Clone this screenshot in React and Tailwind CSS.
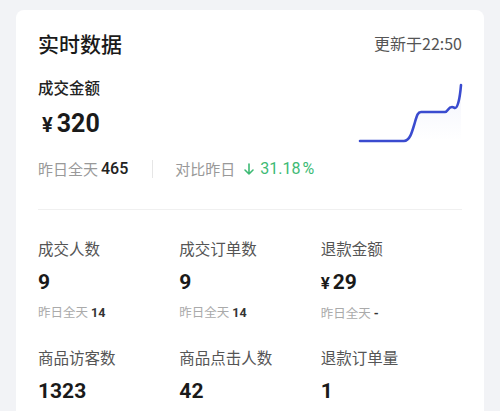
import React from "react";

const font = { fontFamily: '"Noto Sans CJK SC", "Noto Sans", sans-serif' };
const num = { fontFamily: 'Roboto, "Noto Sans CJK SC", sans-serif' };

function Stat({ label, value, prefix, yday }) {
  return (
    <div className="flex flex-col">
      <div className="text-[15.5px] leading-[22px] text-[#555]">{label}</div>
      <div className="mt-[10px] flex items-baseline text-[21px] leading-[26px] font-bold text-[#1a1a1a]" style={num}>
        {prefix && <span className="mr-[3px] text-[17px] font-bold">¥</span>}
        {value}
      </div>
      {yday !== undefined && (
        <div className="mt-[8px] flex items-baseline text-[12.5px] leading-[18px] text-[#aaa]">
          <span>昨日全天</span>
          <span className="ml-[3px] font-bold text-[#333]" style={num}>{yday}</span>
        </div>
      )}
    </div>
  );
}

export default function App() {
  return (
    <div className="h-[411px] w-[500px] overflow-hidden bg-[#f2f3f6] pl-[16px] pr-[16px] pt-[10px]" style={font}>
      <div className="h-[420px] rounded-[8px] bg-white px-[22px] pt-[18px]">
        <div className="flex items-center justify-between">
          <div className="text-[21px] leading-[30px] font-medium text-[#1a1a1a]">实时数据</div>
          <div className="text-[16px] leading-[22px] text-[#555]">更新于22:50</div>
        </div>
        <div className="mt-[18px] flex justify-between">
          <div className="flex flex-col">
            <div className="text-[15.5px] leading-[22px] font-medium text-[#222]">成交金额</div>
            <div className="mt-[10px] ml-[4px] flex items-baseline text-[25px] leading-[32px] font-bold text-[#1a1a1a]" style={num}>
              <span className="mr-[4px] text-[20px]">¥</span>320
            </div>
            <div className="mt-[17px] flex items-center text-[15px] leading-[22px]">
              <span className="text-[#999]">昨日全天</span>
              <span className="ml-[3px] text-[16px] font-medium text-[#222]" style={num}>465</span>
              <span className="ml-[24px] mr-[22px] h-[18px] w-px bg-[#e6e6e6]"></span>
              <span className="text-[#999]">对比昨日</span>
              <span className="ml-[8px] flex items-center text-[16px] text-[#3dba74]" style={num}>
                <svg width="12" height="14" viewBox="0 0 12 14" fill="none" stroke="#3dba74" strokeWidth="1.6" strokeLinecap="round" strokeLinejoin="round">
                  <path d="M6 2v10M2 8l4 4 4-4" />
                </svg>
                <span className="ml-[5px]">31.18</span>
                <span className="ml-[2px]">%</span>
              </span>
            </div>
          </div>
          <svg width="106" height="64" viewBox="0 0 106 64" className="mt-[6px] mr-[-2px]">
            <defs>
              <linearGradient id="g" x1="0" y1="0" x2="0" y2="1">
                <stop offset="0" stopColor="#3a4bcf" stopOpacity="0.06" />
                <stop offset="1" stopColor="#3a4bcf" stopOpacity="0" />
              </linearGradient>
            </defs>
            <path d="M2 59 L46 59 C52 59 54 50 57 40 C59 33 60 30 63 30 L87 30 C90 30 90 25 94 25 C96 25 96 26 97 26 C100 26 102 15 103 3 L103 59 Z" fill="url(#g)" />
            <path d="M2 59 L46 59 C52 59 54 50 57 40 C59 33 60 30 63 30 L87 30 C90 30 90 25 94 25 C96 25 96 26 97 26 C100 26 102 15 103 3" fill="none" stroke="#3a4bcf" strokeWidth="2.6" strokeLinecap="round" strokeLinejoin="round" />
          </svg>
        </div>
        <div className="mt-[29px] h-px bg-[#f0f0f0]"></div>
        <div className="mt-[27px] grid grid-cols-3 gap-y-[23px]">
          <Stat label="成交人数" value="9" yday="14" />
          <Stat label="成交订单数" value="9" yday="14" />
          <Stat label="退款金额" value="29" prefix yday="-" />
          <Stat label="商品访客数" value="1323" />
          <Stat label="商品点击人数" value="42" />
          <Stat label="退款订单量" value="1" />
        </div>
      </div>
    </div>
  );
}
